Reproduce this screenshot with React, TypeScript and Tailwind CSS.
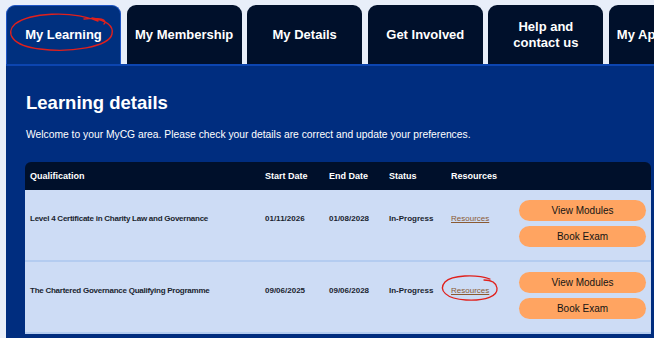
import React from "react";

const tabs = [
  { label: "My Learning", active: true },
  { label: "My Membership" },
  { label: "My Details" },
  { label: "Get Involved" },
  { label: "Help and\ncontact us" },
  { label: "My Applications" },
];

const rows = [
  {
    q: "Level 4 Certificate in Charity Law and Governance",
    start: "01/11/2026",
    end: "01/08/2028",
    status: "In-Progress",
  },
  {
    q: "The Chartered Governance Qualifying Programme",
    start: "09/06/2025",
    end: "09/06/2028",
    status: "In-Progress",
  },
];

function Row({ r }: { r: (typeof rows)[number] }) {
  return (
    <div className="flex h-[72px] bg-[#cddcf5] border-b-2 border-[#b4ccf0] text-[8px] leading-[10px] font-bold text-[#1a1f2e]">
      <div className="w-[235px] pl-[5px] pt-[24px] tracking-[-0.25px]">{r.q}</div>
      <div className="w-[64px] pl-[5px] pt-[24px]">{r.start}</div>
      <div className="w-[60px] pl-[5px] pt-[24px]">{r.end}</div>
      <div className="w-[62px] pl-[5px] pt-[24px]">{r.status}</div>
      <div className="w-[67px] pl-[5px] pt-[24px]">
        <span className="font-normal text-[#8a5a32] underline">Resources</span>
      </div>
      <div className="w-[138px] pl-[6px] pt-[10px] flex flex-col gap-[5px]">
        <div className="w-[127px] h-[21px] rounded-full bg-[#ffa461] flex items-center justify-center text-[10px] font-normal text-[#141414]">
          View Modules
        </div>
        <div className="w-[127px] h-[21px] rounded-full bg-[#ffa461] flex items-center justify-center text-[10px] font-normal text-[#141414]">
          Book Exam
        </div>
      </div>
    </div>
  );
}

export default function App() {
  return (
    <div className="relative w-[654px] h-[338px] overflow-hidden bg-[#e8eef9] font-['Liberation_Sans',Arial,sans-serif]">
      <div className="flex gap-[5.6px] pl-[6px] pt-[5px]">
        {tabs.map((t) => (
          <div
            key={t.label}
            className={
              t.active
                ? "shrink-0 w-[115px] h-[59px] rounded-t-[9px] bg-[#00307f] border border-b-0 border-[#1f55c4] flex items-center justify-center text-center text-white font-bold text-[13px] leading-[16px] whitespace-pre-line"
                : "shrink-0 w-[115px] h-[59px] rounded-t-[9px] bg-[#00102b] flex items-center justify-center text-center text-white font-bold text-[13px] leading-[16px] whitespace-pre-line"
            }
          >
            {t.label}
          </div>
        ))}
      </div>
      <div className="ml-[6px] w-[700px] h-[300px] bg-[#002d7f] border-t-2 border-[#0c45b0] pl-[20px] pt-[26px]">
        <h2 className="text-[18.5px] leading-[22px] font-bold text-white">Learning details</h2>
        <p className="mt-[14px] text-[10.3px] leading-[14px] text-white">
          Welcome to your MyCG area. Please check your details are correct and update your preferences.
        </p>
        <div className="mt-[20px] -ml-px w-[626px] rounded-t-[6px] overflow-hidden">
          <div className="flex h-[28px] items-center bg-[#00102b] text-white font-bold text-[9px] leading-[11px]">
            <div className="w-[235px] pl-[5px]">Qualification</div>
            <div className="w-[64px] pl-[5px]">Start Date</div>
            <div className="w-[60px] pl-[5px]">End Date</div>
            <div className="w-[62px] pl-[5px]">Status</div>
            <div className="w-[67px] pl-[5px]">Resources</div>
            <div className="w-[138px]"></div>
          </div>
          {rows.map((r) => (
            <Row key={r.q} r={r} />
          ))}
        </div>
      </div>

      <svg className="absolute left-0 top-0 pointer-events-none" width="654" height="338" viewBox="0 0 654 338">
        <path
          d="M84 19 C 100 17, 108 20, 104 24 M 98 21 C 70 10, 30 13, 15 24 C 5 33, 12 46, 40 49 C 70 53, 109 47, 112 34 C 114 26, 106 20, 92 18"
          fill="none"
          stroke="#e0201c"
          strokeWidth="1.4"
          strokeLinecap="round"
        />
        <path
          d="M490 279 C 476 274, 452 275, 445 282 C 438 290, 446 299, 466 300 C 486 301, 498 296, 497 288 C 496 282, 490 280, 484 280"
          fill="none"
          stroke="#e0201c"
          strokeWidth="1.3"
          strokeLinecap="round"
        />
      </svg>
    </div>
  );
}
